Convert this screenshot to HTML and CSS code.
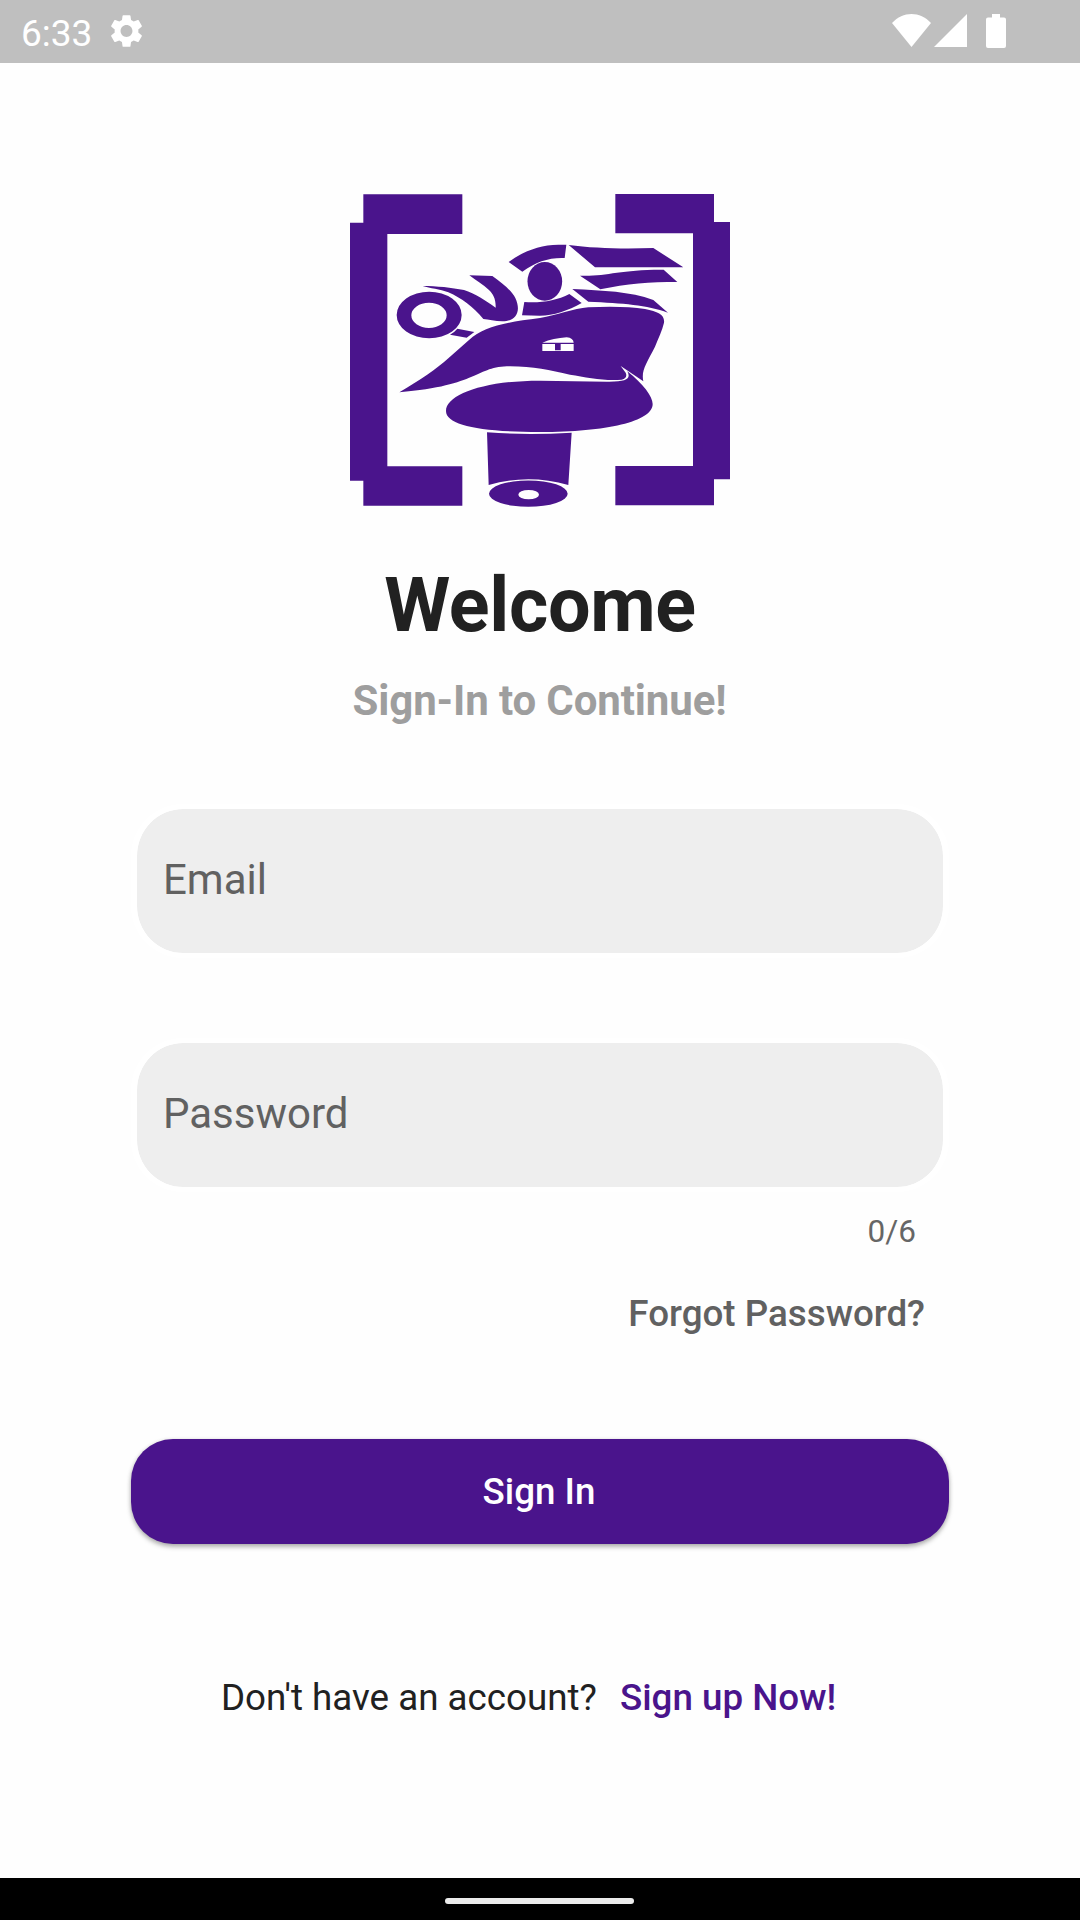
FILE: index.html
```html
<!DOCTYPE html>
<html lang="en">
<head>
<meta charset="utf-8">
<title>Sign In</title>
<link rel="stylesheet" href="styles.css">
</head>
<body>
<header class="status-bar">
  <span class="clock">6:33</span>
  <svg class="gear" viewBox="2 2 20 20"><path fill-rule="evenodd" d="M19.14 12.94c.04-.3.06-.61.06-.94 0-.32-.02-.64-.07-.94l2.03-1.58c.18-.14.23-.41.12-.61l-1.92-3.32c-.12-.22-.37-.29-.59-.22l-2.39.96c-.5-.38-1.03-.7-1.62-.94l-.36-2.54c-.04-.24-.24-.41-.48-.41h-3.84c-.24 0-.43.17-.47.41l-.36 2.54c-.59.24-1.13.57-1.62.94l-2.39-.96c-.22-.08-.47 0-.59.22L2.74 8.87c-.12.21-.08.47.12.61l2.03 1.58c-.05.3-.09.63-.09.94s.02.64.07.94l-2.03 1.58c-.18.14-.23.41-.12.61l1.92 3.32c.12.22.37.29.59.22l2.39-.96c.5.38 1.03.7 1.62.94l.36 2.54c.05.24.24.41.48.41h3.84c.24 0 .44-.17.47-.41l.36-2.54c.59-.24 1.13-.56 1.62-.94l2.39.96c.22.08.47 0 .59-.22l1.92-3.32c.12-.22.07-.47-.12-.61l-2.01-1.58zM12 15.6c-1.98 0-3.6-1.62-3.6-3.6s1.62-3.6 3.6-3.6 3.6 1.62 3.6 3.6-1.62 3.6-3.6 3.6z"/></svg>
  <svg class="wifi" viewBox="0 0 39 33"><path d="M0 9C11-3 28-3 39 9L19.500 33Z"/></svg>
  <svg class="signal" viewBox="0 0 33 33"><path d="M33 0V33H0Z"/></svg>
  <svg class="battery" viewBox="0 0 20 34"><path d="M6 0h8v3.500h4a2 2 0 0 1 2 2V32a2 2 0 0 1-2 2H2a2 2 0 0 1-2-2V5.500a2 2 0 0 1 2-2h4z"/></svg>
</header>
<main class="page">
  <svg class="logo" viewBox="30 42 1140 939">
    <path d="M70 43H367V162H142V859H367V977H70V902H30V128H70Z"/>
    <path d="M826 42H1122V126H1170V898H1122V976H826V858H1059V160H826Z"/>
    <path fill-rule="evenodd" d="M170 405a97.500 70 0 1 0 195 0a97.500 70 0 1 0-195 0ZM214 406a53 38 0 1 1 106 0a53 38 0 1 1-106 0Z"/>
    <path d="M352 446L403 456L380 473L330 464Q344 456 352 446Z"/>
    <path d="M248 318C290 318 335 323 372 330C405 340 438 362 467 383C468 358 460 342 446 329C430 314 408 302 388 286L457 288C490 311 517 335 526 354C545 395 528 424 487 424C465 424 445 418 430 417C400 380 365 355 325 337C300 327 270 325 248 318Z"/>
    <ellipse cx="614.500" cy="304" rx="52" ry="58"/>
    <path d="M506 246C550 213 600 195 655 194H679L674 234C628 232 588 245 547 275Z"/>
    <path d="M553 366C600 370 650 362 688 342L725 369C685 392 640 407 600 407L546 406Z"/>
    <path d="M686 195C760 205 850 207 940 204L1030 262H765Z"/>
    <path d="M720 287C800 290 840 268 971 269L1012 306C930 306 860 311 781 328Z"/>
    <path d="M697 327C790 332 870 334 940 360L984 398C920 374 850 370 745 365Z"/>
    <path d="M178 637C240 600 290 567 325 535L387 480C430 440 490 428 600 414C650 406 700 386 745 382C810 379 870 380 915 387C955 395 975 405 972 428C967 450 955 475 945 500C920 550 903 570 910 604L842 558L857 578Q864 594 845 599C795 604 740 592 690 584C630 571 580 559 510 559C405 559 420 617 178 637Z"/>
    <path d="M318 693C318 645 430 602 600 602L800 605C860 606 874 596 862 574C910 612 938 650 938 672C938 725 800 756 600 756C420 756 318 736 318 693Z"/>
    <path d="M441 757Q560 766 695 758L685 915Q565 880 446 915Z"/>
    <path fill-rule="evenodd" d="M447 941a118 39.500 0 1 0 236 0a118 39.500 0 1 0-236 0ZM535 944a31 14 0 1 1 62 0a31 14 0 1 1-62 0Z"/>
    <path class="hut" d="M607 488Q640 475 680 472Q700 474 701 488ZM607 492H645V511H662V492H701V513H607Z"/>
  </svg>
  <h1 class="title">Welcome</h1>
  <p class="subtitle">Sign-In to Continue!</p>
  <div class="field">Email</div>
  <div class="field field-password">Password</div>
  <div class="counter">0/6</div>
  <div class="forgot"><span>Forgot Password?</span></div>
  <button class="submit" type="button">Sign In</button>
  <p class="signup"><span class="question">Don't have an account?</span><span class="link">Sign up Now!</span></p>
</main>
<footer class="nav-bar"><span class="handle"></span></footer>
</body>
</html>
```
FILE: styles.css
```css
* { box-sizing: border-box; margin: 0; padding: 0; }
body {
  width: 1080px;
  height: 1920px;
  display: flex;
  flex-direction: column;
  overflow: hidden;
  background: #fefefe;
  color: #212121;
  font-family: Roboto, sans-serif;
}
.status-bar {
  height: 63px;
  flex: none;
  display: flex;
  align-items: flex-start;
  padding: 14px 74px 0 21px;
  background: #bfbfbf;
  color: #fff;
  fill: #fff;
}
.clock { width: 89px; font-size: 37px; line-height: 40px; }
.gear { width: 33px; height: 34px; }
.wifi { width: 39px; height: 33px; margin-left: auto; }
.signal { width: 33px; height: 33px; margin-left: 3px; }
.battery { width: 20px; height: 34px; margin-left: 19px; }
.page {
  flex: 1;
  display: flex;
  flex-direction: column;
  padding: 131px 131px 0;
}
.logo { width: 380px; height: 313px; margin: 0 auto; fill: #4a148c; }
.hut { fill: #fff; }
.title { margin-top: 53px; text-align: center; font-size: 75.500px; line-height: 90px; font-weight: 700; letter-spacing: -.3px; }
.subtitle { margin-top: 26px; padding-right: 1px; text-align: center; font-size: 42px; line-height: 50px; font-weight: 700; letter-spacing: -.12px; color: #9e9e9e; }
.field {
  height: 154px;
  margin-top: 78px;
  border: 5px solid #fff;
  border-width: 5px 6px;
  border-radius: 52px;
  background: #eee;
  background-clip: padding-box;
  padding: 0 26px;
  font-size: 42px;
  line-height: 141px;
  color: #616161;
}
.field-password { margin-top: 80px; }
.counter { margin: 22px 33px 0; text-align: right; font-size: 31.500px; line-height: 36px; color: #666; }
.forgot { margin: 42px 24px 0; text-align: right; font-size: 36.750px; line-height: 44px; font-weight: 500; color: #616161; }
.submit {
  height: 105px;
  margin-top: 103px;
  padding-right: 2px;
  border: 0;
  border-radius: 42px;
  background: #4a148c;
  color: #fff;
  font: 500 36.750px/105px Roboto, sans-serif;
  box-shadow: 0 3px 5px rgba(0, 0, 0, .25), 0 1px 4px rgba(0, 0, 0, .15);
}
.signup { display: flex; margin: 132px 0 0 90px; font-size: 36.750px; line-height: 44px; white-space: nowrap; }
.link { margin-left: 23px; font-weight: 500; color: #4a148c; }
.nav-bar { height: 42px; flex: none; display: flex; align-items: flex-start; justify-content: center; padding: 20px 1px 0 0; background: #000; }
.handle { width: 189px; height: 6px; border-radius: 3px; background: #ebebeb; }
```
